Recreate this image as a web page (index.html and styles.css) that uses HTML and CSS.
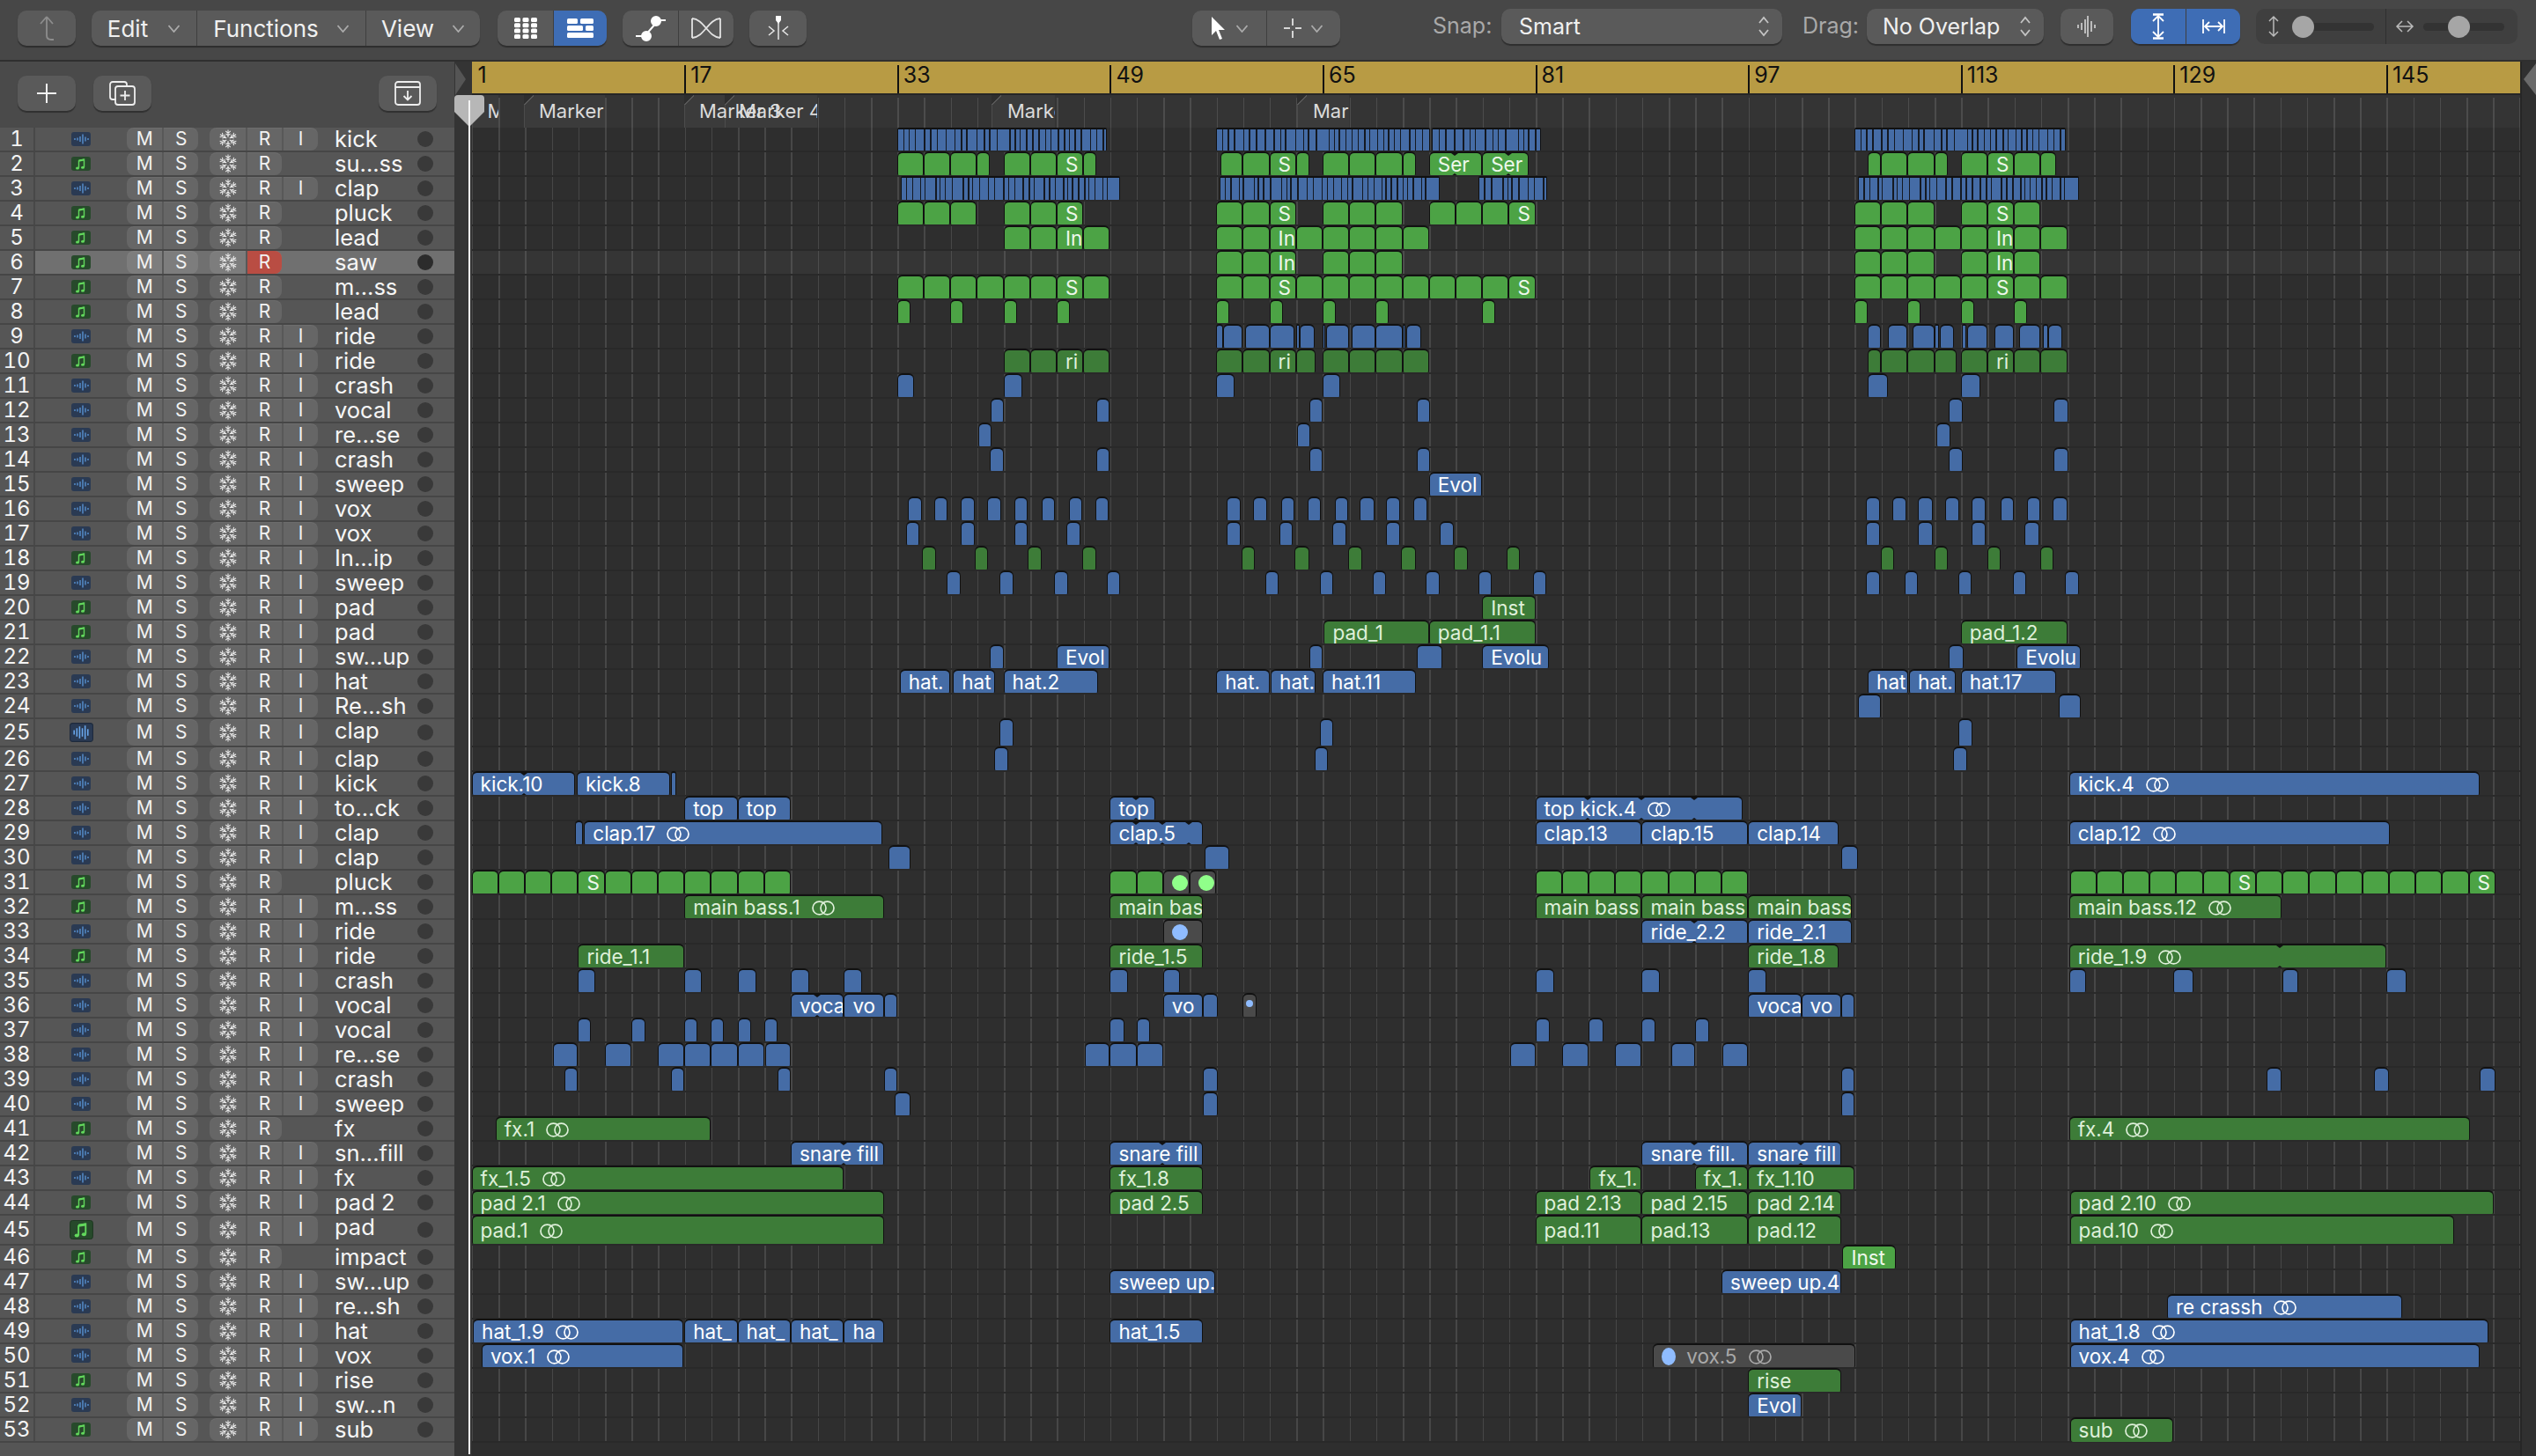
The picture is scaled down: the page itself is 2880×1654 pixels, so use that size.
FILE: index.html
```html
<!DOCTYPE html>
<html lang="en">
<head>
<meta charset="utf-8">
<title>Tracks</title>
<link rel="stylesheet" href="styles.css">
<script src="app.js" defer></script>
</head>
<body>
<svg class="defs" width="0" height="0" aria-hidden="true">
  <symbol id="flake" viewBox="0 0 22 22">
    <g fill="none" stroke="#ececec" stroke-width="1.050">
      <g id="arm"><path d="M11 9V.5M8.200 1.800l2.800 2.600 2.800-2.600M8.500 4.800l2.500 2.200 2.500-2.200"/></g>
      <use href="#arm" transform="rotate(60 11 11)"/>
      <use href="#arm" transform="rotate(120 11 11)"/>
      <use href="#arm" transform="rotate(180 11 11)"/>
      <use href="#arm" transform="rotate(240 11 11)"/>
      <use href="#arm" transform="rotate(300 11 11)"/>
    </g>
  </symbol>
  <symbol id="wave" viewBox="0 0 22 16">
    <rect width="22" height="16" rx="3" fill="#2a3a53"/>
    <path d="M4 7v2M7 6.500v3M10 5v6M13 2.500v11M16 5.500v5M19 7v2" stroke="#5f9fe6" stroke-width="1.200"/>
  </symbol>
  <symbol id="wavebig" viewBox="0 0 26 21">
    <rect x=".5" y=".5" width="25" height="20" rx="3" fill="#2a3a53" stroke="#1e2a3c"/>
    <path d="M5 8v5M8 6v9M11 4v13M14 6v9M17 3v15M20 7v7" stroke="#6aa8ee" stroke-width="1.500"/>
  </symbol>
  <symbol id="note" viewBox="0 0 22 16">
    <rect width="22" height="16" rx="3" fill="#274a2b"/>
    <path d="M8.500 4.200 14.500 3v9M8.500 4.200v8.600" fill="none" stroke="#62d85c" stroke-width="1.400"/>
    <path d="M8.500 3.700 14.500 2.500v2l-6 1.200z" fill="#62d85c"/>
    <ellipse cx="7" cy="13" rx="2" ry="1.500" fill="#62d85c"/><ellipse cx="13" cy="12.200" rx="2" ry="1.500" fill="#62d85c"/>
  </symbol>
  <symbol id="notebig" viewBox="0 0 28 23">
    <rect x=".5" y=".5" width="27" height="22" rx="3" fill="#274a2b" stroke="#1c3520"/>
    <path d="M10.500 6 19 4.500v12M10.500 6v12" fill="none" stroke="#62d85c" stroke-width="2"/>
    <path d="M10.500 5.200 19 3.700v3l-8.500 1.500z" fill="#62d85c"/>
    <ellipse cx="8.500" cy="18.300" rx="2.700" ry="2" fill="#62d85c"/><ellipse cx="17" cy="17" rx="2.700" ry="2" fill="#62d85c"/>
  </symbol>
  <symbol id="loop" viewBox="0 0 28 17">
    <g fill="none" stroke="currentColor" stroke-width="1.700"><ellipse cx="9.500" cy="8.500" rx="7.500" ry="7.400"/><ellipse cx="18.500" cy="8.500" rx="7.500" ry="7.400"/></g>
  </symbol>
  <symbol id="chev" viewBox="0 0 15 9"><path d="M1.500 1 7.500 8l6-7" fill="none" stroke="#ababab" stroke-width="1.800"/></symbol>
  <symbol id="updown" viewBox="0 0 14 28"><path d="M2 10 7 4l5 6M2 18l5 6 5-6" fill="none" stroke="#c4c4c4" stroke-width="1.800"/></symbol>
</svg>

<div class="app">
  <header class="toolbar">
    <button class="tbtn w66 disabled"><svg width="26" height="30" viewBox="0 0 26 30"><path d="M13 2 6 10M13 2l7 8M13 2v21q0 5 5 5h3" fill="none" stroke="#8d8d8d" stroke-width="1.800"/></svg></button>
    <div class="group">
      <button class="seg w-edit"><span>Edit</span><svg class="chev"><use href="#chev"/></svg></button>
      <button class="seg w-func"><span>Functions</span><svg class="chev"><use href="#chev"/></svg></button>
      <button class="seg w-view"><span>View</span><svg class="chev"><use href="#chev"/></svg></button>
    </div>
    <div class="group g20">
      <button class="seg w63"><svg width="26" height="24" viewBox="0 0 26 24" fill="#fff"><rect width="7" height="5" rx="1.500"/><rect x="9.500" width="7" height="5" rx="1.500"/><rect x="19" width="7" height="5" rx="1.500"/><rect y="6.300" width="7" height="5" rx="1.500"/><rect x="9.500" y="6.300" width="7" height="5" rx="1.500"/><rect x="19" y="6.300" width="7" height="5" rx="1.500"/><rect y="12.600" width="7" height="5" rx="1.500"/><rect x="9.500" y="12.600" width="7" height="5" rx="1.500"/><rect x="19" y="12.600" width="7" height="5" rx="1.500"/><rect y="19" width="7" height="5" rx="1.500"/><rect x="9.500" y="19" width="7" height="5" rx="1.500"/><rect x="19" y="19" width="7" height="5" rx="1.500"/></svg></button>
      <button class="seg w61 blue"><svg width="30" height="22" viewBox="0 0 30 22" fill="#fff"><rect width="12" height="6" rx="1.500"/><rect x="15" width="15" height="6" rx="1.500"/><rect y="8" width="18" height="6" rx="1.500"/><rect x="21" y="8" width="9" height="6" rx="1.500"/><rect y="16" width="30" height="6" rx="1.500"/></svg></button>
    </div>
    <div class="group">
      <button class="seg w63"><svg width="38" height="30" viewBox="0 0 38 30" fill="none" stroke="#fff" stroke-width="2"><path d="M2 24h9M27 6h9M13 23 26 8"/><circle cx="14" cy="24" r="5" fill="#fff"/><circle cx="25" cy="7" r="5" fill="#fff"/></svg></button>
      <button class="seg w63"><svg width="36" height="26" viewBox="0 0 36 26" fill="none" stroke="#e2e2e2" stroke-width="1.800"><path d="M2 2v22M34 2v22M2 2c13 0 19 22 32 22M2 24C15 24 21 2 34 2"/></svg></button>
    </div>
    <button class="tbtn w65 ml18"><svg width="28" height="28" viewBox="0 0 28 28" fill="none" stroke="#e8e8e8" stroke-width="1.500"><path d="M14 7v20M3 12l6 5-6 5M25 12l-6 5 6 5"/><path d="M11 0h6v5l-3 4-3-4z" fill="#fff" stroke="none"/></svg></button>

    <div class="group tools">
      <button class="seg w84"><svg width="18" height="28" viewBox="0 0 18 28" fill="#fff"><path d="M1 1v21l5-5 4 10 3-1-4-10h7z"/></svg><svg class="chev"><use href="#chev"/></svg></button>
      <button class="seg w84"><svg width="20" height="22" viewBox="0 0 20 22" fill="none" stroke="#fff" stroke-width="1.500"><path d="M10 0v8M10 14v8M0 11h7M13 11h7"/></svg><svg class="chev"><use href="#chev"/></svg></button>
    </div>
    <span class="tlabel snap">Snap:</span>
    <button class="popup w-smart"><span>Smart</span><svg class="ud"><use href="#updown"/></svg></button>
    <span class="tlabel drag">Drag:</span>
    <button class="popup w-drag"><span>No Overlap</span><svg class="ud"><use href="#updown"/></svg></button>
    <button class="tbtn w60 wavebtn"><svg width="24" height="26" viewBox="0 0 24 26" stroke="#ddd" stroke-width="1.500"><path d="M2 11v4M6 9v8M10 5v16M13 1v24M17 7v12M21 11v4"/></svg></button>
    <div class="group blue-group">
      <button class="seg w62 blue"><svg width="18" height="30" viewBox="0 0 18 30" fill="none" stroke="#fff" stroke-width="1.800"><path d="M9 3v24M3 9l6-6 6 6M3 21l6 6 6-6"/><path d="M3 1.500h12M3 28.500h12" stroke-width="2.500"/></svg></button>
      <button class="seg w62 blue"><svg width="28" height="18" viewBox="0 0 28 18" fill="none" stroke="#fff" stroke-width="1.800"><path d="M2 1v16M26 1v16M4 9h20M9 4 4 9l5 5M19 4l5 5-5 5"/></svg></button>
    </div>
    <div class="zooms">
      <div class="zoom z-v">
        <svg width="14" height="28" viewBox="0 0 14 28" fill="none" stroke="#bbb" stroke-width="1.500"><path d="M7 3v22M2 8l5-5 5 5M2 20l5 5 5-5"/></svg>
        <div class="track"><i class="thumb t-v"></i></div>
      </div>
      <div class="zoom z-h">
        <svg width="22" height="16" viewBox="0 0 22 16" fill="none" stroke="#bbb" stroke-width="1.500"><path d="M3 8h16M8 2 2 8l6 6M14 2l6 6-6 6"/></svg>
        <div class="track"><i class="thumb t-h"></i></div>
      </div>
    </div>
  </header>

  <main class="main">
    <aside class="tracklist">
      <div class="listhead">
        <button class="tbtn w66"><svg width="24" height="24" viewBox="0 0 24 24" stroke="#f2f2f2" stroke-width="2"><path d="M12 1v22M1 12h22"/></svg></button>
        <button class="tbtn w66"><svg width="34" height="30" viewBox="0 0 34 30" fill="none" stroke="#eee" stroke-width="1.800"><path d="M10 22H6a3 3 0 0 1-3-3V5a3 3 0 0 1 3-3h13a3 3 0 0 1 3 3v2"/><rect x="9" y="7" width="22" height="21" rx="3"/><path d="M20 12v11M14.500 17.500h11"/></svg></button>
        <button class="tbtn w66 right"><svg width="30" height="28" viewBox="0 0 30 28" fill="none" stroke="#eee" stroke-width="1.800"><rect x="1" y="1" width="28" height="26" rx="3"/><path d="M1 7h28M15 11v10M10.500 17l4.500 4.500 4.500-4.500"/></svg></button>
      </div>
      <div id="rows"></div>
    </aside>
    <div class="gutter"><i class="ruler-tab"></i></div>
    <section class="timeline">
      <div class="ruler" id="ruler"></div>
      <div class="markers" id="markers"></div>
      <div class="lanes" id="lanes"></div>
    </section>
    <div class="edge"><i class="edge-tab"></i></div>
    <div class="playhead">
      <svg width="34" height="36" viewBox="0 0 34 36"><path d="M0 4q0-4 4-4h26q4 0 4 4v15L17 36 0 19z" fill="#b7b7b7"/></svg>
      <i class="playline"></i>
    </div>
  </main>
</div>
</body>
</html>
```

FILE: styles.css
```css
* { box-sizing: border-box; }
html, body { margin: 0; padding: 0; }
body { width: 2880px; height: 1654px; overflow: hidden; background: #484848; font-family: Inter, "Liberation Sans", sans-serif; color: #f0f0f0; }
.defs { position: absolute; }
button { font: inherit; color: inherit; border: 0; padding: 0; background: none; }
svg { display: block; flex: none; }

.app { display: flex; flex-direction: column; width: 2880px; height: 1654px; }

/* toolbar */
.toolbar { display: flex; align-items: flex-start; height: 68px; padding: 12px 20px 0; background: #474747; }
.tbtn, .group { height: 40px; background: #5a5a5a; border-radius: 10px; box-shadow: 0 1.5px 1px rgba(0,0,0,.35); }
.tbtn { display: flex; align-items: center; justify-content: center; flex: none; }
.group { display: flex; overflow: hidden; margin-left: 18px; flex: none; }
.g20 { margin-left: 20px; }
.ml18 { margin-left: 18px; }
.seg { display: flex; align-items: center; justify-content: center; height: 100%; font-size: 26px; border-left: 1px solid #3f3f3f; }
.seg:first-child { border-left: 0; }
.seg.blue { background: #3e6db5; }
.chev { width: 15px; height: 9px; }
.w-edit { width: 119px; gap: 22px; }
.w-func { width: 192px; gap: 20px; }
.w-view { width: 130px; gap: 20px; }
.w63 { width: 63px; }
.w61 { width: 61px; }
.w62 { width: 62px; }
.w84 { width: 84px; gap: 10px; }
.w60 { width: 60px; }
.w65 { width: 65px; }
.w66 { width: 66px; }
.tools { margin-left: 438px; }
.tlabel { font-size: 25px; color: #a9a9a9; line-height: 34px; flex: none; }
.snap { margin-left: 105px; width: 78px; }
.drag { margin-left: 23px; width: 73px; }
.popup { display: flex; align-items: center; justify-content: space-between; height: 40px; margin-top: -2px; padding: 0 14px 0 20px; font-size: 25px; background: #5a5a5a; border-radius: 10px; box-shadow: 0 1.5px 1px rgba(0,0,0,.35); flex: none; }
.w-smart { width: 319px; }
.w-drag { width: 201px; padding-left: 18px; }
.ud { width: 14px; height: 28px; }
.wavebtn { margin-left: 19px; margin-top: -2px; }
.blue-group { margin-left: 20px; margin-top: -2px; background: #3e6db5; }
.zooms { display: flex; height: 40px; margin-left: 18px; margin-top: -2px; background: #3f3f3f; border-radius: 10px; flex: none; }
.zoom { display: flex; align-items: center; gap: 14px; height: 100%; }
.z-v { width: 148px; padding-left: 13px; gap: 15px; border-right: 1px solid #2f2f2f; }
.z-h { width: 149px; padding-left: 10px; gap: 10px; }
.track { position: relative; width: 92px; height: 9px; border-radius: 5px; background: #333; }
.thumb { position: absolute; top: -8px; width: 25px; height: 25px; border-radius: 50%; background: #a6a6a6; }
.t-v { left: -1px; }
.t-h { left: 28px; }

/* main */
.main { position: relative; display: flex; flex: 1; min-height: 0; border-top: 2px solid #2f2f2f; }
.tracklist { width: 516px; flex: none; background: #555; }
.listhead { display: flex; align-items: flex-start; gap: 20px; height: 75px; padding: 16px 20px 0; background: #4a4a4a; }
.listhead .right { margin-left: auto; }

.row { display: grid; grid-template-columns: 40px 104px 81px 13px 124px 1fr 18px; align-items: stretch; height: 28px; padding-right: 24px; background: #565656; border-top: 2px solid #464646; }
.row:first-child { height: 26px; border-top: 0; }
.row:last-child { box-shadow: 0 2px 0 #464646; }
.row.tall25 { height: 32px; }
.row.tall45 { height: 34px; }
.row.sel { background: #707070; }
.num { display: flex; align-items: center; justify-content: center; font-size: 24px; line-height: 26px; font-variant-numeric: tabular-nums; border-right: 2px solid #484848; overflow: hidden; color: #f4f4f4; }
.row.sel .num { background: #5c5c5c; }
.ticon { display: flex; align-items: center; justify-content: center; }
.ticon svg { width: 22px; height: 16px; }
.row.tall25 .ticon svg, .row.tall45 .ticon svg { width: 27px; height: 22px; }
.btns { display: flex; border-radius: 8px; overflow: hidden; background: #666; box-shadow: inset 0 1px 0 rgba(255,255,255,.05); grid-column: 3; }
.btns.b2 { grid-column: 5; justify-self: start; }
.row.sel .btns { background: #7d7d7d; }
.tb { display: flex; align-items: center; justify-content: center; width: 41px; font-size: 21px; line-height: 26px; border-left: 2px solid #585858; color: #f2f2f2; }
.tb:first-child { border-left: 0; }
.tb.rec-on { background: #b94d43; }
.tb svg { width: 22px; height: 22px; }
.name { grid-column: 6; padding-left: 18px; font-size: 25.500px; line-height: 26px; overflow: hidden; white-space: nowrap; color: #f6f6f6; }
.dot { grid-column: 7; align-self: center; width: 18px; height: 18px; border-radius: 50%; background: #393939; }
.row.sel .dot { background: #2c2c2c; }

/* gutter */
.gutter { position: relative; width: 19.6px; flex: none; background: #343434; }
.ruler-tab { position: absolute; top: 2px; left: 1px; width: 12px; height: 36px; background: #555; clip-path: polygon(0 0, 100% 50%, 0 100%); }
.edge { position: relative; flex: 1; background: #303030; box-shadow: inset 2px 0 0 #262626; }
.edge-tab { position: absolute; top: 2px; left: 4px; width: 14px; height: 36px; background: #6a6a6a; clip-path: polygon(100% 0, 100% 100%, 0 50%); }

/* timeline */
.timeline { width: 2326.4px; flex: none; background: #2e2e2e; }
.ruler { display: flex; height: 38px; background: #b89b44; border-bottom: 2px solid #262626; overflow: hidden; margin-right: -2px; }
.bar { position: relative; flex: none; width: 241.6px; padding-left: 7px; font-size: 25px; line-height: 31px; color: #111; }
.bar::before { content: ""; position: absolute; left: 0; top: 4px; bottom: 0; width: 2px; background: #111; }
.bar:first-child::before { display: none; }
.markers { position: relative; height: 37px; background-color: #343434; background-image: repeating-linear-gradient(90deg, #4c4c4c 0 1.5px, transparent 1.5px 30.2px); background-size: 100% 34px; background-repeat: no-repeat; background-position: 0 3px; }
.marker { position: absolute; top: 0; bottom: 0; background: #3b3b3b; font-size: 22px; line-height: 37px; color: #dcdcdc; white-space: nowrap; overflow: hidden; box-shadow: inset 1px 0 0 #4c4c4c; }
.marker.over { overflow: visible; z-index: 1; }
.marker::before { content: ""; position: absolute; left: 0; top: 0; width: 11px; height: 11px; background: linear-gradient(135deg, #2e2e2e 0 48%, #585858 48% 58%, transparent 58%); }
.lanes { background-image: repeating-linear-gradient(90deg, #474747 0 1.5px, transparent 1.5px 30.2px); }
.lane { position: relative; height: 28px; border-top: 2px solid #292929; }
.lane:first-child { height: 26px; border-top: 0; }
.lane:last-child { box-shadow: 0 2px 0 #292929; }
.lane.tall25 { height: 32px; }
.lane.tall45 { height: 34px; }
.lane.sel { background-color: rgba(255,255,255,.035); }

/* regions */
.clip { position: absolute; top: -1px; bottom: -1px; display: flex; align-items: center; padding-left: 9px; font-size: 22.500px; line-height: 24px; white-space: nowrap; overflow: hidden; color: #fff; border: 1.5px solid #111; border-top-width: 2px; border-bottom: 0; border-radius: 6px 6px 3px 3px; }
.lane:first-child .clip { top: 0; }
.clip.blue { background: #456ca6; }
.clip.g { background: #4ca345; color: #eef8ec; }
.clip.d { background: #3d7c38; color: #dff0da; }
.clip.m { background: #4a4a4a; color: #a9a9a9; }
.clip.tiny { padding: 0; }
.loop { width: 28px; height: 17px; margin-left: 12px; }
.sep { position: absolute; top: 0; bottom: 0; width: 1.500px; background: #141922; }
.notch { position: absolute; width: 0; height: 0; margin-left: -4px; border-left: 4px solid transparent; border-right: 4px solid transparent; }
.notch.top { top: 0; border-top: 3px solid #111; }
.notch.bot { bottom: 0; border-bottom: 3px solid #111; }
.mdot { flex: none; width: 18px; height: 18px; border-radius: 50%; margin-left: 1px; margin-right: 12px; }
.mdot.green { background: #90ff8a; }
.mdot.sky { background: #8fbcff; }
.mdot.small { width: 8px; height: 8px; margin: -6px 0 0 3px; }
.mdot.oval { width: 16px; height: 20px; }
.mdot.indent { margin-left: 9px; }

/* playhead */
.playhead { position: absolute; top: 38px; left: 516px; width: 34px; bottom: 2px; pointer-events: none; }
.playline { position: absolute; left: 16px; top: 6px; bottom: 0; width: 2px; background: #f4f4f4; }
```

FILE: app.js
```js
const U = 15.1;
const names = ["kick","su...ss","clap","pluck","lead","saw","m...ss","lead","ride","ride","crash","vocal","re...se","crash","sweep","vox","vox","In...ip","sweep","pad","pad","sw...up","hat","Re...sh","clap","clap","kick","to...ck","clap","clap","pluck","m...ss","ride","ride","crash","vocal","vocal","re...se","crash","sweep","fx","sn...fill","fx","pad 2","pad","impact","sw...up","re...sh","hat","vox","rise","sw...n","sub"];
const midi = new Set([2,4,5,6,7,8,10,18,20,21,31,32,34,41,44,45,46,51,53]);
const noInput = new Set([2,4,5,6,7,8,31,41,46]);

// expands a run of equal cells: cells(32, 38, {44:"S"})
function cells(a, b, labels, step) {
  const out = [], s = step || 2;
  for (let p = a; p < b - 0.01; p += s) out.push([p, Math.min(p + s, b), (labels && labels[p]) || ""]);
  return out;
}
const pairs = (...v) => { const o = []; for (let i = 0; i < v.length; i += 2) o.push([v[i], v[i + 1]]); return o; };

const kickSep = [5,5.6,6,9,6,6.6,8.7,8.7,6.6,5,10,7.6,5,7.6,12.7,5,5,6.6,6,6,6.6,5,7.6,6];
const clapSep = [4,6,8,4,11,4,5,7,11,5,4,7,9,6,9,5,6,8,6,5,10,5,6,8,4,5,6,6];
const stripe = (a, b, seps) => [a, b, "", { stripes: seps }];

const data = {
  1: ["blue", [stripe(32,47.8,kickSep), stripe(56,72.1,kickSep), stripe(72.2,80.4,kickSep.slice(4)), stripe(104,119.9,kickSep)]],
  2: ["g", [...cells(32,38), [38,39], ...cells(40,46,{44:"S"}), [46,47],
            [56.3,58], [58,60], [60,62,"S"], [62,63], ...cells(64,70), [70,71],
            [72,76,"Ser",{n:[74]}], [76,79.5,"Ser",{n:[78]}],
            [105,106], [106,108], [108,110], [110,111], [112,114], [114,116,"S"], [116,118], [118,119.2]]],
  3: ["blue", [stripe(32.3,48.8,clapSep), stripe(56.25,72.8,clapSep), stripe(75.7,80.9,clapSep.slice(6)), stripe(104.3,120.9,clapSep)]],
  4: ["g", [...cells(32,38), ...cells(40,46,{44:"S"}), ...cells(56,62,{60:"S"}), ...cells(64,70), ...cells(72,80,{78:"S"}), ...cells(104,110), ...cells(112,118,{114:"S"})]],
  5: ["g", [...cells(40,48,{44:"In"}), ...cells(56,72,{60:"In"}), ...cells(104,120,{114:"In"})]],
  6: ["g", [...cells(56,62,{60:"In"}), ...cells(64,70), ...cells(104,110), ...cells(112,118,{114:"In"})]],
  7: ["g", [...cells(32,48,{44:"S"}), ...cells(56,80,{60:"S",78:"S"}), ...cells(104,120,{114:"S"})]],
  8: ["g", pairs(32,33,36,37,40,41,44,45,56,57,60,61,64,65,68,69,76,77,104,105,108,109,112,113,116,117)],
  9: ["blue", pairs(56,56.5,56.5,58,58.2,60,60,61.9,62,62.25,62.3,63.4,64,64.2,64.3,66,66.2,68,68,70,70,70.25,70.3,71.4,105,106,106.5,108,108.4,110,110,110.35,110.4,111.5,112.1,112.4,112.45,114,114.5,116,116.4,118,118.2,118.55,118.6,119.6)],
  10: ["d", [...cells(40,48,{44:"ri"}), ...cells(56,62,{60:"ri"}), [62,63.5], ...cells(64,72), [105,106], ...cells(106,110), [110,111.7], ...cells(112,120,{114:"ri"})]],
  11: ["blue", pairs(32,33.3,40,41.4,56,57.4,64,65.3,105,106.5,112,113.5)],
  12: ["blue", pairs(39.06,40.06,47,48,63,64,71.1,72.1,111.1,112.15,119,120.1)],
  13: ["blue", pairs(38.1,39.1,62.1,63.1,110.15,111.2)],
  14: ["blue", pairs(39,40,47,48,63,64,71.1,72.1,111.1,112.15,119,120.1)],
  15: ["blue", [[72,76,"Evol"]]],
  16: ["blue", pairs(32.8,33.86,34.8,35.8,36.8,37.85,38.76,39.8,40.8,41.8,42.9,43.9,44.9,45.95,46.9,47.9,56.8,57.85,58.8,59.8,60.9,61.9,62.9,63.9,64.9,65.9,66.8,67.9,68.8,69.85,70.8,71.85,104.85,105.9,106.85,107.9,108.8,109.9,110.85,111.9,112.8,113.85,115,116,117,118,118.9,120)],
  17: ["blue", pairs(32.7,33.7,36.8,37.85,40.8,41.8,44.75,45.8,56.8,57.85,60.75,61.75,64.75,65.8,68.8,69.85,72.8,73.85,104.85,105.9,108.8,109.9,112.8,113.85,116.8,117.9)],
  18: ["d", pairs(33.86,34.9,37.85,38.85,41.8,42.85,45.95,47,57.9,58.9,61.9,63,65.9,67,69.9,71,73.9,74.9,77.85,78.85,106,107,110,111,114,115,118,119)],
  19: ["blue", pairs(35.7,36.8,39.7,40.75,43.8,44.85,47.8,48.8,59.7,60.7,63.8,64.8,67.8,68.8,71.75,72.8,75.75,76.75,79.8,80.85,104.85,105.9,107.8,108.8,111.8,112.8,115.9,116.9,119.85,120.9)],
  20: ["d", [[76,80,"Inst"]]],
  21: ["d", [[64.1,72,"pad_1"],[72,80,"pad_1.1"],[112,120,"pad_1.2"]]],
  22: ["blue", [[39,40],[44,48,"Evol"],[63,64],[71.1,73],[76,81,"Evolu"],[111.1,112.2],[116.2,121,"Evolu"]]],
  23: ["blue", [[32.2,36,"hat."],[36.2,39.4,"hat"],[40,47.1,"hat.2"],[56,60,"hat."],[60.1,63.5,"hat."],[64,71,"hat.11"],[105,108.05,"hat"],[108.1,111.6,"hat."],[112,119.2,"hat.17"]]],
  24: ["blue", pairs(104.3,106,119.35,121)],
  25: ["blue", pairs(39.7,40.75,63.8,64.8,111.8,112.85)],
  26: ["blue", pairs(39.3,40.35,63.4,64.4,111.4,112.45)],
  27: ["blue", [[0,7.75,"kick.10",{n:[4]}],[7.9,14.9,"kick.8"],[15,15.4],[120.14,151.05,"kick.4",{loop:1}]]],
  28: ["blue", [[16,20,"top"],[20,24,"top"],[48,51.45,"top",{n:[50]}],[80,95.6,"top kick.4",{loop:1,n:[84,88,92]}]]],
  29: ["blue", [[7.8,8.36],[8.46,30.9,"clap.17",{loop:1}],[48,55,"clap.5",{n:[50,52,54]}],[80,88,"clap.13"],[88,96,"clap.15"],[96,102.8,"clap.14"],[120.14,144.3,"clap.12",{loop:1}]]],
  30: ["blue", pairs(31.35,33,55.1,57,103,104.3)],
  31: ["g", [...cells(0,24,{8:"S"}), ...cells(48,52), [52,54,"",{mute:"green"}], [54,56,"",{mute:"green"}], ...cells(80,96), ...cells(120.2,152.2,{132.2:"S",150.2:"S"})]],
  32: ["d", [[16,31,"main bass.1",{loop:1}],[48,55,"main bass"],[80,88,"main bass"],[88,96,"main bass"],[96,103.8,"main bass"],[120.14,136.1,"main bass.12",{loop:1}]]],
  33: ["blue", [[52,55,"",{mute:"sky"}],[88,96,"ride_2.2",{n:[92]}],[96,103.8,"ride_2.1"]]],
  34: ["d", [[8,16,"ride_1.1"],[48,55,"ride_1.5"],[96,102.8,"ride_1.8"],[120.14,144,"ride_1.9",{loop:1,n:[136]}]]],
  35: ["blue", pairs(8,9.3,16,17.3,20,21.4,24,25.4,28,29.4,48,49.35,52,53.3,80,81.4,88,89.35,96,97.4,120.14,121.4,128,129.5,136.2,137.4,144,145.5)],
  36: ["blue", [[24,28,"voca",{n:[26]}],[28,31,"vo"],[31,32],[52,55,"vo"],[55,56.1],[58,59.05,"",{mute:"small"}],[96,100,"voca"],[100,103,"vo"],[103,104]]],
  37: ["blue", pairs(8,9,12,13.1,16,17,18,19,20,21,22,23,48,49.1,50,51.05,80,81.1,84,85.1,88,89.05,92,93.05)],
  38: ["blue", pairs(6.1,8,10,12,14,16,16,18,18,20,20,22,22.1,24,46.1,48,48,50,50,52,78.1,80,82,84,86,88,90.2,92,94.1,96)],
  39: ["blue", pairs(7,8,15,16,23,24,31,32,55,56.1,103,104,135,136.1,143.1,144.2,151,152.2)],
  40: ["blue", pairs(31.8,33,55,56.1,103,104)],
  41: ["d", [[1.8,18,"fx.1",{loop:1}],[120.14,150.3,"fx.4",{loop:1}]]],
  42: ["blue", [[24,31,"snare fill",{n:[28]}],[48,55,"snare fill",{n:[52]}],[88,96,"snare fill.",{n:[92]}],[96,103,"snare fill",{n:[100]}]]],
  43: ["d", [[0,28,"fx_1.5",{loop:1}],[48,55,"fx_1.8"],[84.1,88,"fx_1."],[92,96,"fx_1."],[96,104,"fx_1.10"]]],
  44: ["d", [[0,31,"pad 2.1",{loop:1}],[48,55,"pad 2.5"],[80,88,"pad 2.13"],[88,96,"pad 2.15"],[96,103,"pad 2.14"],[120.2,152.1,"pad 2.10",{loop:1}]]],
  45: ["d", [[0,31,"pad.1",{loop:1}],[80,88,"pad.11"],[88,96,"pad.13"],[96,103,"pad.12"],[120.2,149.1,"pad.10",{loop:1}]]],
  46: ["g", [[103.1,107.1,"Inst"]]],
  47: ["blue", [[48,55.9,"sweep up."],[94,103,"sweep up.4"]]],
  48: ["blue", [[127.5,145.2,"re crassh",{loop:1}]]],
  49: ["blue", [[0.1,15.9,"hat_1.9",{loop:1}],[16,20,"hat_"],[20,24,"hat_"],[24,28,"hat_"],[28,31,"ha"],[48,55,"hat_1.5"],[120.2,151.7,"hat_1.8",{loop:1}]]],
  50: ["blue", [[0.75,15.9,"vox.1",{loop:1}],[88.85,104.06,"vox.5",{loop:1,mute:"oval"}],[120.2,151,"vox.4",{loop:1}]]],
  51: ["d", [[96,103,"rise"]]],
  52: ["blue", [[96,100,"Evol"]]],
  53: ["d", [[120.2,128,"sub",{loop:1}]]]
};

const NS = "http://www.w3.org/2000/svg";
function icon(id, cls) {
  const s = document.createElementNS(NS, "svg");
  if (cls) s.setAttribute("class", cls);
  const u = document.createElementNS(NS, "use");
  u.setAttribute("href", "#" + id);
  s.appendChild(u);
  return s;
}
function el(cls, text) {
  const d = document.createElement("div");
  d.className = cls;
  if (text) d.textContent = text;
  return d;
}

const rowsEl = document.getElementById("rows");
const lanesEl = document.getElementById("lanes");

names.forEach((name, i) => {
  const n = i + 1;
  const extra = (n === 6 ? " sel" : "") + (n === 25 ? " tall25" : "") + (n === 45 ? " tall45" : "");
  const row = el("row" + extra);
  row.appendChild(el("num", String(n)));
  const ic = el("ticon");
  const big = n === 25 || n === 45;
  ic.appendChild(icon(midi.has(n) ? (big ? "notebig" : "note") : (big ? "wavebig" : "wave")));
  row.appendChild(ic);

  const ms = el("btns");
  ms.append(el("tb", "M"), el("tb", "S"));
  row.appendChild(ms);

  const fri = el("btns b2");
  const fz = el("tb"); fz.appendChild(icon("flake"));
  fri.append(fz, el("tb" + (n === 6 ? " rec-on" : ""), "R"));
  if (!noInput.has(n)) fri.appendChild(el("tb", "I"));
  row.appendChild(fri);

  row.append(el("name", name), el("dot"));
  rowsEl.appendChild(row);

  const lane = el("lane" + extra);
  const spec = data[n];
  if (spec) spec[1].forEach(c => lane.appendChild(makeClip(spec[0], c)));
  lanesEl.appendChild(lane);
});

function makeClip(color, c) {
  const [a, b, label, opts = {}] = c;
  const d = el("clip " + color);
  const muted = opts.mute;
  if (muted) d.className = "clip m";
  d.style.left = (a * U).toFixed(1) + "px";
  const w = (b - a) * U;
  d.style.width = w.toFixed(1) + "px";
  if (w < 24 || muted) d.classList.add("tiny");
  if (muted) {
    const kind = muted === "green" ? "green indent" : muted === "small" ? "sky small" : muted === "oval" ? "sky oval indent" : "sky indent";
    d.appendChild(el("mdot " + kind));
  }
  if (label) d.appendChild(document.createTextNode(label));
  if (opts.loop) d.appendChild(icon("loop", "loop"));
  (opts.n || []).forEach(p => {
    const left = ((p - a) * U - 1.5).toFixed(1) + "px";
    ["top", "bot"].forEach(k => { const t = el("notch " + k); t.style.left = left; d.appendChild(t); });
  });
  if (opts.stripes) {
    let x = 0, i = 0;
    const seps = opts.stripes;
    while (true) {
      x += seps[i % seps.length] * 1.15; i++;
      if (x > w - 6) break;
      const s = el("sep");
      s.style.left = x.toFixed(1) + "px";
      d.appendChild(s);
    }
    d.style.borderRadius = "2px";
  }
  return d;
}

const ruler = document.getElementById("ruler");
for (let b = 1; b <= 145; b += 16) ruler.appendChild(el("bar", String(b)));

const markers = document.getElementById("markers");
[[535.6,30,"M",18],[595,92,"Marker",17],[777,46,"Marker 3",17,1],[823,105,"Marker 4",16],[1126,72,"Marker",18],[1473,59,"Marker",18]].forEach(([x, w, t, pad, over]) => {
  const m = el("marker" + (over ? " over" : ""), t);
  m.style.left = (x - 535.6).toFixed(1) + "px";
  m.style.width = w + "px";
  m.style.paddingLeft = pad + "px";
  markers.appendChild(m);
});
```
